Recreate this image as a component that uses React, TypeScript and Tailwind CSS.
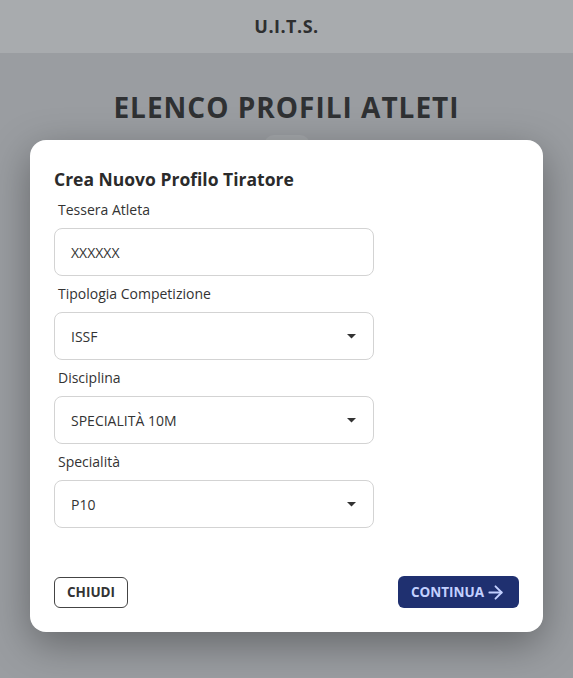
import { ArrowRight } from 'lucide-react';

const fields = [
  { label: 'Tessera Atleta', value: 'XXXXXX', select: false },
  { label: 'Tipologia Competizione', value: 'ISSF', select: true },
  { label: 'Disciplina', value: 'SPECIALITÀ 10M', select: true },
  { label: 'Specialità', value: 'P10', select: true },
];

function Caret() {
  return (
    <svg width="9" height="5" viewBox="0 0 9 5" className="text-[#333]">
      <path d="M0 0 L9 0 L4.5 4.5 Z" fill="currentColor" />
    </svg>
  );
}

export default function App() {
  return (
    <div
      className="relative h-[678px] w-full overflow-hidden bg-[#9a9da1] text-[#333]"
      style={{ fontFamily: '"Open Sans", "Noto Sans", sans-serif' }}
    >
      <header className="flex h-[53px] items-center justify-center bg-[#a8abae]">
        <span className="text-[18px] font-bold tracking-[0.5px] text-[#2e2f30]">U.I.T.S.</span>
      </header>
      <div className="flex flex-col items-center pt-[33px]">
        <h1 className="text-[28px] font-bold tracking-[1px] text-[#2f3133]">ELENCO PROFILI ATLETI</h1>
        <div className="mt-[7px] h-[10px] w-[46px] rounded-t-full bg-[#a3a6a9]" />
      </div>

      <div className="absolute inset-x-[30px] top-[140px] flex h-[492px] flex-col rounded-[16px] bg-white px-[24px] pt-[26px] pb-[24px] shadow-[0_12px_40px_rgba(0,0,0,0.35)]">
        <h2 className="text-[17.5px] font-bold text-[#2b2b2b]">Crea Nuovo Profilo Tiratore</h2>
        <div className="mt-[8px] flex flex-col">
          {fields.map((f) => (
            <div key={f.label} className="mb-[8px] flex flex-col">
              <label className="ml-[4px] text-[14px] leading-[20px] text-[#333]">{f.label}</label>
              <div className="mt-[8px] flex h-[48px] w-[320px] items-center justify-between rounded-[8px] border border-[#d3d3d3] pl-[16px] pr-[17px] text-[14px] text-[#333]">
                <span>{f.value}</span>
                {f.select && <Caret />}
              </div>
            </div>
          ))}
        </div>
        <div className="mt-auto flex items-center justify-between">
          <button className="h-[31px] rounded-[6px] border border-[#444] px-[12px] text-[13.5px] font-bold text-[#333]">
            CHIUDI
          </button>
          <button className="flex h-[32px] items-center gap-[1px] rounded-[6px] bg-[#1f3070] pl-[13px] pr-[13px] text-[13.5px] font-bold text-[#c3d0ff]">
            CONTINUA
            <ArrowRight size={21} strokeWidth={2.2} />
          </button>
        </div>
      </div>
    </div>
  );
}
